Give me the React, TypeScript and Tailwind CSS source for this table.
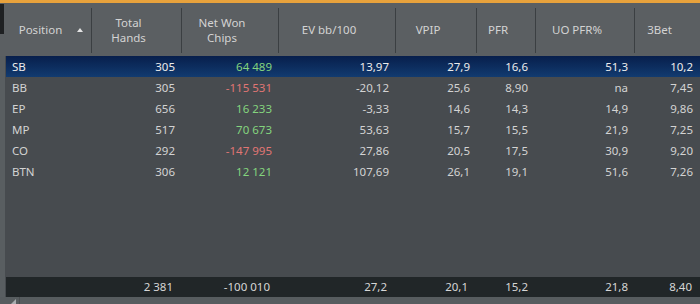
import React from 'react';

interface Row {
  pos: string;
  hands: string;
  net: string;
  ev: string;
  vpip: string;
  pfr: string;
  uo: string;
  threeBet: string;
}

const rows: Row[] = [
  { pos: 'SB', hands: '305', net: '64 489', ev: '13,97', vpip: '27,9', pfr: '16,6', uo: '51,3', threeBet: '10,2' },
  { pos: 'BB', hands: '305', net: '-115 531', ev: '-20,12', vpip: '25,6', pfr: '8,90', uo: 'na', threeBet: '7,45' },
  { pos: 'EP', hands: '656', net: '16 233', ev: '-3,33', vpip: '14,6', pfr: '14,3', uo: '14,9', threeBet: '9,86' },
  { pos: 'MP', hands: '517', net: '70 673', ev: '53,63', vpip: '15,7', pfr: '15,5', uo: '21,9', threeBet: '7,25' },
  { pos: 'CO', hands: '292', net: '-147 995', ev: '27,86', vpip: '20,5', pfr: '17,5', uo: '30,9', threeBet: '9,20' },
  { pos: 'BTN', hands: '306', net: '12 121', ev: '107,69', vpip: '26,1', pfr: '19,1', uo: '51,6', threeBet: '7,26' },
];

const cols = 'grid grid-cols-[86px_90px_97px_117px_81px_59px_99px_65px]';

const HeaderCell = ({ lines, sep = true, sort = false }: { lines: string[]; sep?: boolean; sort?: boolean }) => (
  <div className="flex h-full">
    <div className="flex-1 flex items-center pr-4 relative">
      <div className="flex-1 text-center leading-[15px]">
        {lines.map(l => (
          <div key={l}>{l}</div>
        ))}
      </div>
      {sort && (
        <svg width="6" height="4" viewBox="0 0 6 4" className="absolute right-[8px] top-[25px]">
          <path d="M0 4 L3 0 L6 4 Z" fill="#e4e4e4" />
        </svg>
      )}
    </div>
    {sep && <div className="w-px bg-[#3b3f42] my-[5px] mb-[3px]" />}
  </div>
);

export default function App() {
  return (
    <div
      className="w-[700px] h-[304px] flex flex-col bg-[#474b4f] text-[#d3d3d3] text-[11.5px] overflow-hidden"
      style={{ fontFamily: '"Noto Sans", "Open Sans", sans-serif' }}
    >
      <div className="h-[3px] bg-[#e8a23c]" />

      {/* header */}
      <div className="h-[53px] flex bg-[#5b5f62]">
        <div className="w-[6px] pt-[1px]">
          <div className="w-[4px] h-[30px] bg-[#1e2022]" />
        </div>
        <div className={`${cols} flex-1`}>
          <HeaderCell lines={['Position']} sort />
          <HeaderCell lines={['Total', 'Hands']} />
          <HeaderCell lines={['Net Won', 'Chips']} />
          <HeaderCell lines={['EV bb/100']} />
          <HeaderCell lines={['VPIP']} />
          <HeaderCell lines={['PFR']} />
          <HeaderCell lines={['UO PFR%']} />
          <HeaderCell lines={['3Bet']} sep={false} />
        </div>
      </div>

      {/* body */}
      <div className="flex-1 flex">
        <div className="w-[5px] bg-[#595e61]" />
        <div className="flex-1 flex flex-col pl-px">
          <div className="flex-1">
            {rows.map((r, i) => (
              <div
                key={r.pos}
                className={`${cols} h-[21px] items-center ${
                  i === 0 ? 'bg-gradient-to-b from-[#081f4c] to-[#123b70] text-[#ececec]' : ''
                }`}
              >
                <div className="pl-[6px]">{r.pos}</div>
                <div className="text-right pr-[7px]">{r.hands}</div>
                <div className={`text-right pr-[7px] ${r.net.startsWith('-') ? 'text-[#e07674]' : 'text-[#84d47e]'}`}>
                  {r.net}
                </div>
                <div className="text-right pr-[7px]">{r.ev}</div>
                <div className="text-right pr-[7px]">{r.vpip}</div>
                <div className="text-right pr-[8px]">{r.pfr}</div>
                <div className="text-right pr-[7px]">{r.uo}</div>
                <div className="text-right pr-[7px]">{r.threeBet}</div>
              </div>
            ))}
          </div>

          {/* totals */}
          <div className={`${cols} h-[20px] items-center bg-[#212628] text-[#d6d6d6]`}>
            <div />
            <div className="text-right pr-[9px]">2 381</div>
            <div className="text-right pr-[9px]">-100 010</div>
            <div className="text-right pr-[9px]">27,2</div>
            <div className="text-right pr-[9px]">20,1</div>
            <div className="text-right pr-[8px]">15,2</div>
            <div className="text-right pr-[7px]">21,8</div>
            <div className="text-right pr-[8px]">8,40</div>
          </div>
        </div>
      </div>

      {/* horizontal scrollbar */}
      <div className="h-[7px] flex bg-[#575c5f]">
        <div className="w-[20px] flex items-end pl-[11px] border-r border-[#4a4e51]">
          <svg width="5" height="5" viewBox="0 0 5 5">
            <path d="M5 0 L5 5 L0 5 Z" fill="#a9adb0" />
          </svg>
        </div>
      </div>
    </div>
  );
}
